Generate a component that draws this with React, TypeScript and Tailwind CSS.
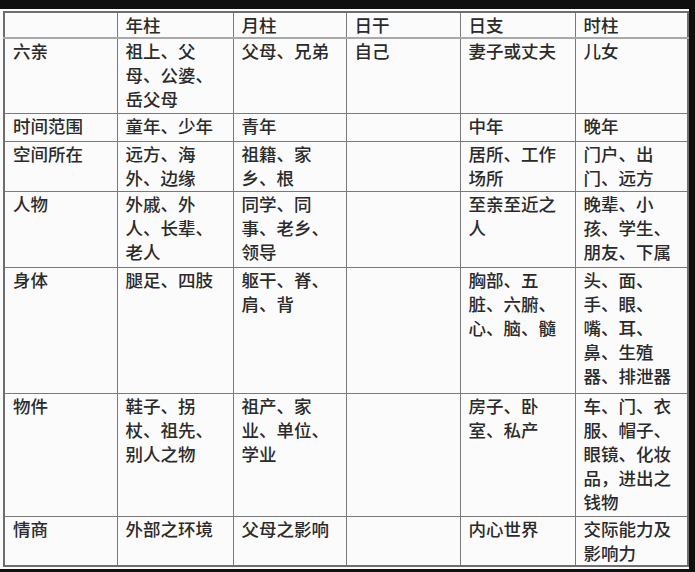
import React from 'react';

type Row = { h: number; cells: string[][] };

const widths = [113, 116, 113, 114, 115, 113];

const rows: Row[] = [
  { h: 75, cells: [['六亲'], ['祖上、父', '母、公婆、', '岳父母'], ['父母、兄弟'], ['自己'], ['妻子或丈夫'], ['儿女']] },
  { h: 28, cells: [['时间范围'], ['童年、少年'], ['青年'], [], ['中年'], ['晚年']] },
  { h: 50, cells: [['空间所在'], ['远方、海', '外、边缘'], ['祖籍、家', '乡、根'], [], ['居所、工作', '场所'], ['门户、出', '门、远方']] },
  { h: 76, cells: [['人物'], ['外戚、外', '人、长辈、', '老人'], ['同学、同', '事、老乡、', '领导'], [], ['至亲至近之', '人'], ['晚辈、小', '孩、学生、', '朋友、下属']] },
  { h: 126, cells: [['身体'], ['腿足、四肢'], ['躯干、脊、', '肩、背'], [], ['胸部、五', '脏、六腑、', '心、脑、髓'], ['头、面、', '手、眼、', '嘴、耳、', '鼻、生殖', '器、排泄器']] },
  { h: 123, cells: [['物件'], ['鞋子、拐', '杖、祖先、', '别人之物'], ['祖产、家', '业、单位、', '学业'], [], ['房子、卧', '室、私产'], ['车、门、衣', '服、帽子、', '眼镜、化妆', '品，进出之', '钱物']] },
  { h: 50, cells: [['情商'], ['外部之环境'], ['父母之影响'], [], ['内心世界'], ['交际能力及', '影响力']] },
];

const header = ['', '年柱', '月柱', '日干', '日支', '时柱'];

const Lines = ({ lines }: { lines: string[] }) => (
  <>
    {lines.map((l, i) => (
      <div key={i} className="whitespace-nowrap">{l}</div>
    ))}
  </>
);

const App = () => {
  return (
    <div className="w-[695px] h-[572px] bg-[#0f0f0f] pt-[9px] overflow-hidden">
      <div className="w-[689px] h-[560px] bg-[#fbfbfb] pt-[2px] pl-[3px] overflow-hidden">
        <table
          className="table-fixed border-collapse border-2 border-[#6e6e6e] text-[17.5px] leading-[24px] text-[#2a2a2a] font-medium"
          style={{ width: 684 }}
        >
          <colgroup>
            {widths.map((w, i) => (
              <col key={i} style={{ width: w }} />
            ))}
          </colgroup>
          <thead>
            <tr className="h-[26px]">
              {header.map((t, i) => (
                <th
                  key={i}
                  className="border border-[#7a7a7a] border-b-2 border-b-[#a9a9a9] p-0 pl-[8px] text-left align-top font-medium font-['Noto_Sans_CJK_SC',sans-serif]"
                >
                  {t}
                </th>
              ))}
            </tr>
          </thead>
          <tbody>
            {rows.map((r, ri) => (
              <tr key={ri} style={{ height: r.h }}>
                {r.cells.map((c, ci) => (
                  <td
                    key={ci}
                    className="border border-[#7a7a7a] p-0 pl-[8px] align-top font-['Noto_Sans_CJK_SC',sans-serif]"
                  >
                    <Lines lines={c} />
                  </td>
                ))}
              </tr>
            ))}
          </tbody>
        </table>
      </div>
    </div>
  );
};

export default App;
